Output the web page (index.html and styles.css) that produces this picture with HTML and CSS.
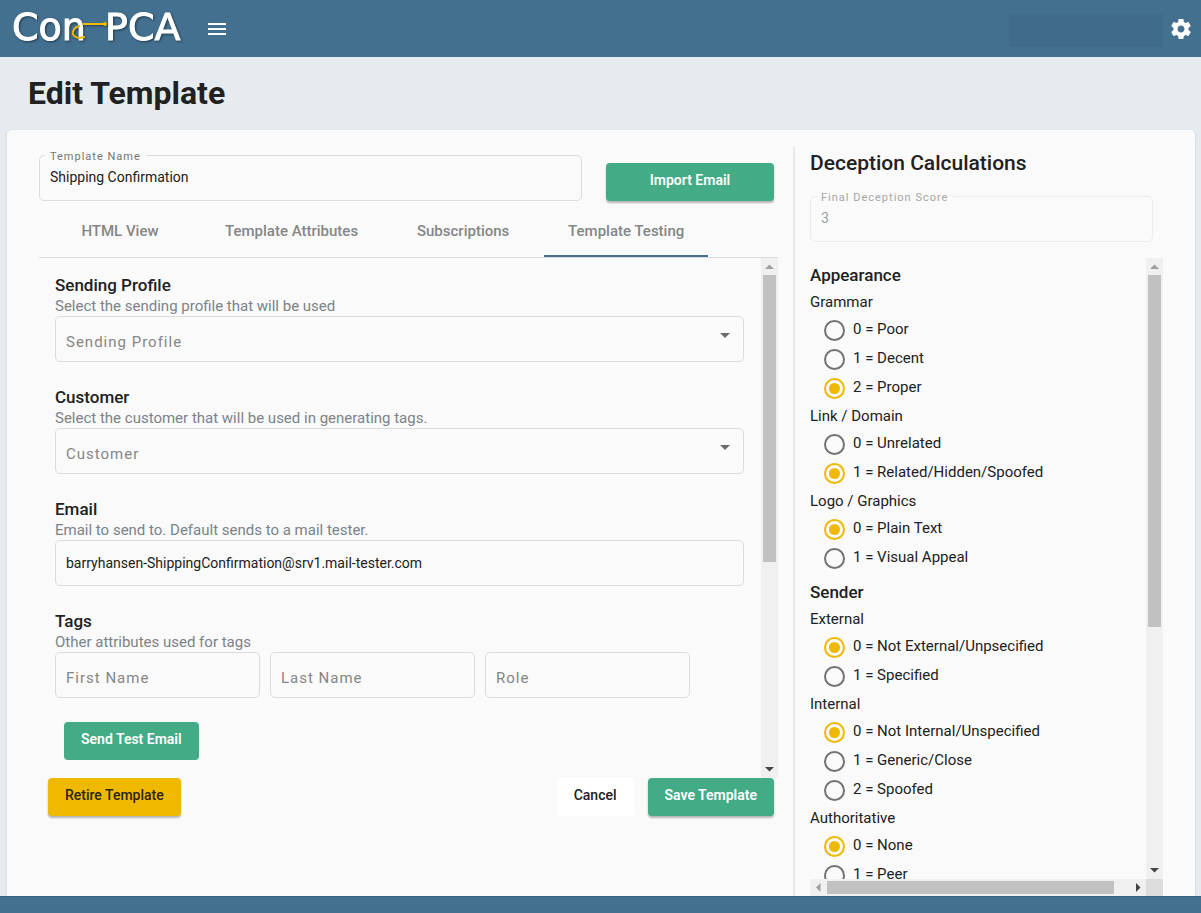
FILE: index.html
```html
<!DOCTYPE html>
<html lang="en">
<head>
<meta charset="utf-8">
<meta name="viewport" content="width=device-width, initial-scale=1">
<title>Con-PCA - Edit Template</title>
<link rel="stylesheet" href="styles.css">
</head>
<body>
<header class="topbar">
  <svg class="logo" width="176" height="32" viewBox="0 0 176 32" role="img" aria-label="Con-PCA">
    <g class="logo-text">
      <text x="-1" y="30">Con</text>
      <text x="92" y="30">PCA</text>
    </g>
    <g class="logo-hook">
      <path d="M69 14H91"/>
      <path d="M67 16C60 17 57 25 63 27C66 29 69 27 72 27"/>
      <circle cx="92" cy="14" r="1"/>
    </g>
  </svg>
  <button class="icon-button" type="button" aria-label="Menu">
    <svg width="24" height="24" viewBox="0 0 24 24"><path d="M3 18h18v-2H3v2zm0-5h18v-2H3v2zm0-7v2h18V6H3z"/></svg>
  </button>
  <div class="user-block"></div>
  <button class="icon-button" type="button" aria-label="Settings">
    <svg width="24" height="24" viewBox="0 0 24 24"><path d="M19.43 12.98c.04-.32.07-.64.07-.98s-.03-.66-.07-.98l2.11-1.65c.19-.15.24-.42.12-.64l-2-3.46c-.12-.22-.39-.3-.61-.22l-2.49 1c-.52-.4-1.08-.73-1.69-.98l-.38-2.65C14.46 2.18 14.25 2 14 2h-4c-.25 0-.46.18-.49.42l-.38 2.65c-.61.25-1.17.59-1.69.98l-2.49-1c-.23-.09-.49 0-.61.22l-2 3.46c-.13.22-.07.49.12.64l2.11 1.65c-.04.32-.07.65-.07.98s.03.66.07.98l-2.11 1.65c-.19.15-.24.42-.12.64l2 3.46c.12.22.39.3.61.22l2.49-1c.52.4 1.08.73 1.69.98l.38 2.65c.03.24.24.42.49.42h4c.25 0 .46-.18.49-.42l.38-2.65c.61-.25 1.17-.59 1.69-.98l2.49 1c.23.09.49 0 .61-.22l2-3.46c.12-.22.07-.49-.12-.64l-2.11-1.65zM12 15.5c-1.93 0-3.500-1.570-3.500-3.500s1.570-3.500 3.500-3.500 3.500 1.570 3.500 3.500-1.570 3.500-3.500 3.500z"/></svg>
  </button>
</header>

<h1 class="page-title">Edit Template</h1>

<main class="card">
  <section class="editor">
    <div class="name-row">
      <div class="field field-grow">
        <label class="float-label" for="template-name">Template Name</label>
        <input class="control control-named" id="template-name" type="text" value="Shipping Confirmation">
      </div>
      <button class="btn btn-green btn-wide" type="button">Import Email</button>
    </div>

    <div class="tabs" role="tablist">
      <button class="tab" role="tab" type="button" aria-selected="false">HTML View</button>
      <button class="tab" role="tab" type="button" aria-selected="false">Template Attributes</button>
      <button class="tab" role="tab" type="button" aria-selected="false">Subscriptions</button>
      <button class="tab tab-active" role="tab" type="button" aria-selected="true">Template Testing</button>
    </div>

    <div class="scroller">
      <div class="form">
        <div class="group">
          <h2 class="group-title">Sending Profile</h2>
          <p class="hint">Select the sending profile that will be used</p>
          <div class="field">
            <select class="control control-empty" aria-label="Sending Profile"><option>Sending Profile</option></select>
            <svg class="caret" width="10" height="5" viewBox="0 0 10 5"><path d="M0 0h10L5 5z"/></svg>
          </div>
        </div>
        <div class="group">
          <h2 class="group-title">Customer</h2>
          <p class="hint">Select the customer that will be used in generating tags.</p>
          <div class="field">
            <select class="control control-empty" aria-label="Customer"><option>Customer</option></select>
            <svg class="caret" width="10" height="5" viewBox="0 0 10 5"><path d="M0 0h10L5 5z"/></svg>
          </div>
        </div>
        <div class="group">
          <h2 class="group-title">Email</h2>
          <p class="hint">Email to send to. Default sends to a mail tester.</p>
          <div class="field">
            <input class="control" type="email" aria-label="Email" value="barryhansen-ShippingConfirmation@srv1.mail-tester.com">
          </div>
        </div>
        <div class="group">
          <h2 class="group-title">Tags</h2>
          <p class="hint">Other attributes used for tags</p>
          <div class="tag-row">
            <div class="field"><input class="control control-empty" type="text" aria-label="First Name" placeholder="First Name"></div>
            <div class="field"><input class="control control-empty" type="text" aria-label="Last Name" placeholder="Last Name"></div>
            <div class="field"><input class="control control-empty" type="text" aria-label="Role" placeholder="Role"></div>
          </div>
        </div>
        <button class="btn btn-green btn-flat btn-send" type="button">Send Test Email</button>
      </div>
      <div class="vbar" aria-hidden="true">
        <svg class="arrow arrow-off" width="17" height="17" viewBox="0 0 17 17"><path d="M4 11h9L8.500 6.500z"/></svg>
        <div class="track"><div class="thumb" style="height:59%"></div></div>
        <svg class="arrow" width="17" height="17" viewBox="0 0 17 17"><path d="M4 6h9L8.500 10.500z"/></svg>
      </div>
    </div>

    <div class="actions">
      <button class="btn btn-yellow" type="button">Retire Template</button>
      <span class="spacer"></span>
      <button class="btn btn-white btn-flat" type="button">Cancel</button>
      <button class="btn btn-green" type="button">Save Template</button>
    </div>
  </section>

  <aside class="scores">
    <h2 class="scores-title">Deception Calculations</h2>
    <div class="field field-off">
      <label class="float-label" for="final-score">Final Deception Score</label>
      <input class="control control-named" id="final-score" type="text" value="3" disabled>
    </div>
    <div class="score-scroller">
      <div class="score-list">
        <h3 class="section-title">Appearance</h3>
        <fieldset class="rating">
          <legend class="rating-title">Grammar</legend>
          <label class="option"><input class="radio" type="radio" name="grammar">0 = Poor</label>
          <label class="option"><input class="radio" type="radio" name="grammar">1 = Decent</label>
          <label class="option"><input class="radio" type="radio" name="grammar" checked>2 = Proper</label>
        </fieldset>
        <fieldset class="rating">
          <legend class="rating-title">Link / Domain</legend>
          <label class="option"><input class="radio" type="radio" name="link">0 = Unrelated</label>
          <label class="option"><input class="radio" type="radio" name="link" checked>1 = Related/Hidden/Spoofed</label>
        </fieldset>
        <fieldset class="rating">
          <legend class="rating-title">Logo / Graphics</legend>
          <label class="option"><input class="radio" type="radio" name="logo" checked>0 = Plain Text</label>
          <label class="option"><input class="radio" type="radio" name="logo">1 = Visual Appeal</label>
        </fieldset>
        <h3 class="section-title">Sender</h3>
        <fieldset class="rating">
          <legend class="rating-title">External</legend>
          <label class="option"><input class="radio" type="radio" name="external" checked>0 = Not External/Unpsecified</label>
          <label class="option"><input class="radio" type="radio" name="external">1 = Specified</label>
        </fieldset>
        <fieldset class="rating">
          <legend class="rating-title">Internal</legend>
          <label class="option"><input class="radio" type="radio" name="internal" checked>0 = Not Internal/Unspecified</label>
          <label class="option"><input class="radio" type="radio" name="internal">1 = Generic/Close</label>
          <label class="option"><input class="radio" type="radio" name="internal">2 = Spoofed</label>
        </fieldset>
        <fieldset class="rating">
          <legend class="rating-title">Authoritative</legend>
          <label class="option"><input class="radio" type="radio" name="authority" checked>0 = None</label>
          <label class="option"><input class="radio" type="radio" name="authority">1 = Peer</label>
        </fieldset>
      </div>
      <div class="vbar" aria-hidden="true">
        <svg class="arrow arrow-off" width="17" height="17" viewBox="0 0 17 17"><path d="M4 11h9L8.500 6.500z"/></svg>
        <div class="track"><div class="thumb" style="height:60%"></div></div>
        <svg class="arrow" width="17" height="17" viewBox="0 0 17 17"><path d="M4 6h9L8.500 10.500z"/></svg>
      </div>
      <div class="hbar" aria-hidden="true">
        <svg class="arrow arrow-off" width="17" height="17" viewBox="0 0 17 17"><path d="M10.500 4v9L6 8.500z"/></svg>
        <div class="track"><div class="thumb" style="width:95%"></div></div>
        <svg class="arrow" width="17" height="17" viewBox="0 0 17 17"><path d="M7 4v9l4.500-4.500z"/></svg>
      </div>
      <div class="corner"></div>
    </div>
  </aside>
</main>
<footer class="footer"></footer>
</body>
</html>
```
FILE: styles.css
```css
* { box-sizing: border-box; }

body {
  margin: 0;
  height: 100vh;
  display: flex;
  flex-direction: column;
  overflow: hidden;
  background: #e6ebef;
  color: #212121;
  font-family: Roboto, "Liberation Sans", sans-serif;
  font-size: 15px;
}

h1, h2, h3, p { margin: 0; }
button, input, select { font: inherit; color: inherit; }
button { cursor: pointer; }

/* Top bar */
.topbar {
  flex: none;
  display: flex;
  align-items: center;
  height: 57px;
  padding: 0 8px 0 13px;
  background: #44708f;
}
.logo {
  margin: 0 16px 5px 0;
  overflow: visible;
  filter: drop-shadow(1px 1px 1px #1f3a4d);
}
.logo-text {
  fill: #fff;
  stroke: #fff;
  stroke-width: 1;
  font-family: "DejaVu Sans", sans-serif;
  font-size: 38px;
}
.logo-hook { fill: none; stroke: #efb900; stroke-width: 2; }
.icon-button {
  display: flex;
  padding: 0;
  border: 0;
  background: none;
  fill: #fff;
}
.user-block {
  width: 154px;
  height: 33px;
  margin: 4px 6px 0 auto;
  background: #406c8a;
}

.page-title {
  flex: none;
  padding: 17px 28px;
  font-size: 32px;
  line-height: 39px;
  font-weight: 700;
}

/* Card */
.card {
  flex: 1;
  min-height: 0;
  display: grid;
  grid-template-columns: minmax(0, 1fr) 402px;
  margin: 0 6px 0 7px;
  padding-top: 17px;
  background: #fafafa;
  border-radius: 5px 5px 0 0;
  box-shadow: 0 1px 3px #c9cfd4;
}
.editor {
  display: flex;
  flex-direction: column;
  min-height: 0;
  padding: 8px 15px 80px 32px;
}
.name-row {
  display: flex;
  gap: 24px;
  padding-right: 4px;
}

/* Fields */
.field { position: relative; }
.field-grow { flex: 1; }
.control {
  display: block;
  width: 100%;
  height: 46px;
  padding: 0 10px;
  border: 1px solid #dcdcdc;
  border-radius: 5px;
  background: transparent;
  appearance: none;
  outline: 0;
  font-size: 14px;
}
.control-named { padding-bottom: 2px; }
.control-empty {
  padding-top: 6px;
  color: #868686;
  font-size: 15px;
  letter-spacing: 1px;
}
.control-empty::placeholder { color: #868686; }
.float-label {
  position: absolute;
  top: -6px;
  left: 6px;
  padding: 0 5px;
  background: #fafafa;
  color: #757575;
  font-size: 11px;
  line-height: 16px;
  letter-spacing: 1px;
}
.field-off .control { border-color: #ececec; color: #9e9e9e; }
.field-off .float-label { color: #a6a6a6; }
.caret {
  position: absolute;
  top: 17px;
  right: 14px;
  fill: #6b6b6b;
  pointer-events: none;
}

/* Buttons */
.btn {
  height: 38px;
  padding: 0 17px 4px;
  border: 0;
  border-radius: 4px;
  font-size: 14px;
  font-weight: 600;
  box-shadow: 0 2px 2px #b5b5b5;
}
.btn-green { background: #43ab86; color: #fff; }
.btn-yellow { background: #efb900; color: #2b2414; font-weight: 500; }
.btn-white { background: #fff; font-weight: 500; }
.btn-flat { box-shadow: none; }
.btn-wide { width: 168px; margin-top: 8px; }
.btn-send { margin-left: 9px; }

/* Tabs */
.tabs {
  flex: none;
  display: flex;
  border-bottom: 1px solid #dcdcdc;
}
.tab {
  min-width: 162px;
  height: 56px;
  padding: 6px 24px 0;
  border: 0;
  border-bottom: 2px solid transparent;
  background: none;
  color: #868686;
  font-weight: 500;
}
.tab-active { border-bottom-color: #44708f; }

/* Template testing form */
.scroller {
  flex: 1;
  min-height: 0;
  display: flex;
}
.form {
  flex: 1;
  min-width: 0;
  padding: 16px 17px 0 16px;
  overflow: hidden;
}
.group { margin-bottom: 24px; }
.group-title {
  font-size: 17px;
  line-height: 22px;
  font-weight: 500;
}
.hint {
  color: #7b838a;
  line-height: 20px;
}
.tag-row {
  display: grid;
  grid-template-columns: repeat(3, 205px);
  gap: 10px;
}
.actions {
  flex: none;
  display: flex;
  gap: 14px;
  padding: 0 4px 0 9px;
}
.spacer { flex: 1; }

/* Scroll bars */
.vbar {
  flex: none;
  display: flex;
  flex-direction: column;
  width: 17px;
  background: #f0f0f0;
}
.hbar { display: flex; background: #f0f0f0; }
.arrow { flex: none; fill: #444; }
.arrow-off { fill: #a0a0a0; }
.track { flex: 1; padding: 0 2px; }
.hbar .track { padding: 2px 0; }
.thumb { height: 100%; background: #c1c1c1; }
.corner { background: #dcdcdc; }

/* Deception scores */
.scores {
  display: flex;
  flex-direction: column;
  min-height: 0;
  padding-left: 15px;
  padding-right: 32px;
  border-left: 2px solid #e6eaed;
}
.scores-title {
  font-size: 21px;
  line-height: 32px;
  font-weight: 500;
}
.scores .field { margin: 17px 10px 16px 0; }
.score-scroller {
  flex: 1;
  min-height: 0;
  display: grid;
  grid-template: minmax(0, 1fr) 17px / minmax(0, 1fr) 17px;
}
.score-list { overflow: hidden; }
.section-title {
  margin-top: 4px;
  font-size: 17px;
  line-height: 27px;
  font-weight: 500;
}
.rating {
  min-width: 0;
  margin: 0;
  padding: 0;
  border: 0;
}
.rating + .section-title { margin-top: 6px; }
.rating-title { padding: 0; line-height: 27px; }
.option {
  display: flex;
  align-items: center;
  gap: 8px;
  height: 29px;
  padding: 0 0 3px 14px;
  line-height: 16px;
}
.radio {
  flex: none;
  width: 21px;
  height: 21px;
  margin: 2px 0 0;
  border: 2px solid #737373;
  border-radius: 50%;
  appearance: none;
}
.radio:checked {
  border-color: #efb900;
  background: #efb900;
  background-clip: content-box;
  padding: 3px;
}

.footer {
  flex: none;
  height: 17px;
  background: #44708f;
  border-top: 1px solid #38627f;
}
```
